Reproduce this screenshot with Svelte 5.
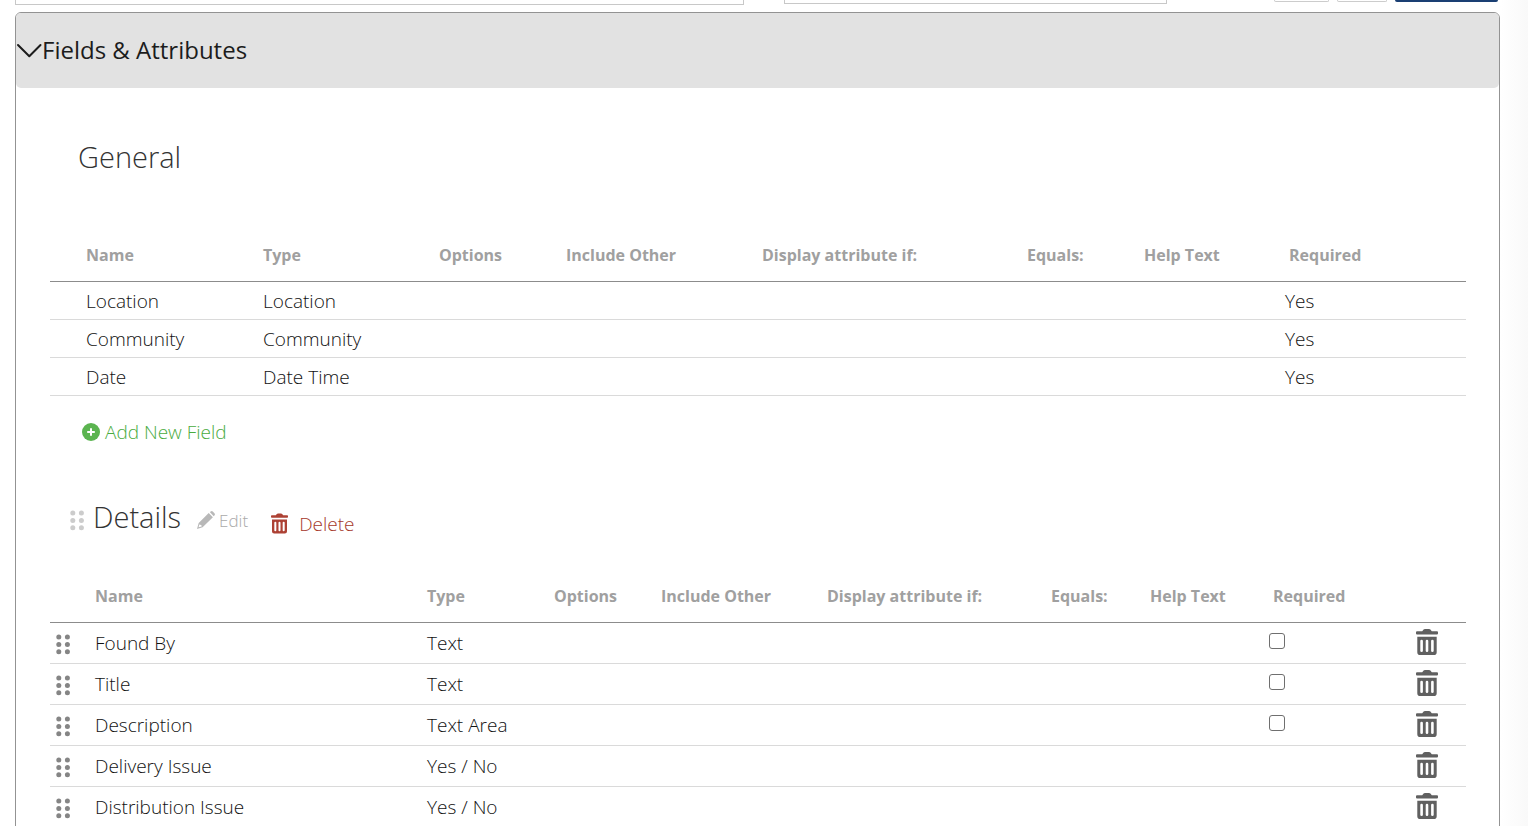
<script>
    const generalColumns = [
        { label: "Name", width: 177 },
        { label: "Type", width: 176 },
        { label: "Options", width: 127 },
        { label: "Include Other", width: 196 },
        { label: "Display attribute if:", width: 265 },
        { label: "Equals:", width: 117 },
        { label: "Help Text", width: 141 },
        { label: "Required", width: 181, inset: true },
    ];

    const detailColumns = [
        { label: "Name", width: 332 },
        { label: "Type", width: 127 },
        { label: "Options", width: 107 },
        { label: "Include Other", width: 166 },
        { label: "Display attribute if:", width: 224 },
        { label: "Equals:", width: 99 },
        { label: "Help Text", width: 119 },
        { label: "Required", width: 147, inset: true },
    ];

    const generalFields = [
        { name: "Location", type: "Location", required: "Yes" },
        { name: "Community", type: "Community", required: "Yes" },
        { name: "Date", type: "Date Time", required: "Yes" },
    ];

    let detailFields = $state([
        { name: "Found By", type: "Text", optional: true, required: false },
        { name: "Title", type: "Text", optional: true, required: false },
        { name: "Description", type: "Text Area", optional: true, required: false },
        { name: "Delivery Issue", type: "Yes / No" },
        { name: "Distribution Issue", type: "Yes / No" },
    ]);

    let open = $state(true);

    const percent = (width) => `${(width / 1416) * 100}%`;

    function remove(field) {
        detailFields = detailFields.filter((f) => f !== field);
    }
</script>

{#snippet grip()}
    <svg class="grip" viewBox="0 0 14 21" aria-hidden="true">
        {#each [3, 10.4, 17.8] as y}
            <circle cx="2.8" cy={y} r="2.5" />
            <circle cx="11.4" cy={y} r="2.5" />
        {/each}
    </svg>
{/snippet}

{#snippet trash()}
    <svg class="trash" viewBox="0 0 22 26" aria-hidden="true">
        <path fill-rule="evenodd" d="M1 2.3h5.2L7.6.6Q8 0 9 0h4q1 0 1.4.6l1.4 1.7H21q1 0 1 1v1.3q0 .9-1 .9H1q-1 0-1-.9V3.3q0-1 1-1zM1.3 7.7h19.4v15.5q0 2.8-2.8 2.8H4.1q-2.8 0-2.8-2.8zM5.6 10.8q-1.3 0-1.3 1.3v9.6q0 1.3 1.3 1.3t1.3-1.3V12.1q0-1.3-1.3-1.3zm5.4 0q-1.3 0-1.3 1.3v9.6q0 1.3 1.3 1.3t1.3-1.3V12.1q0-1.3-1.3-1.3zm5.4 0q-1.3 0-1.3 1.3v9.6q0 1.3 1.3 1.3t1.3-1.3V12.1q0-1.3-1.3-1.3z" />
    </svg>
{/snippet}

<div class="page">
    <div class="toolbar">
        <input class="title-input" aria-label="Title" />
        <input class="search-input" aria-label="Search" />
        <div class="toolbar-buttons">
            <button class="tool" aria-label="Undo"></button>
            <button class="tool" aria-label="Redo"></button>
            <button class="tool primary" aria-label="Save"></button>
        </div>
    </div>

    <section class="panel">
        <button class="panel-header" aria-expanded={open} onclick={() => (open = !open)}>
            <svg class="chevron" class:closed={!open} viewBox="0 0 26 16" aria-hidden="true">
                <path d="M2 2l11.3 11.3L24.5 2" />
            </svg>
            <span>Fields &amp; Attributes</span>
        </button>

        {#if open}
        <div class="panel-body">
            <h2 class="general-title">General</h2>

            <table class="general">
                <colgroup>
                    <col class="lead" />
                    {#each generalColumns as column}
                        <col style:width={percent(column.width)} />
                    {/each}
                </colgroup>
                <thead>
                    <tr>
                        <td></td>
                        {#each generalColumns as column}
                            <th scope="col" class:inset={column.inset}>{column.label}</th>
                        {/each}
                    </tr>
                </thead>
                <tbody>
                    {#each generalFields as field}
                        <tr>
                            <td></td>
                            <td>{field.name}</td>
                            <td>{field.type}</td>
                            <td colspan="5"></td>
                            <td>{field.required}</td>
                        </tr>
                    {/each}
                </tbody>
            </table>

            <button class="add">
                <svg viewBox="0 0 18 18" aria-hidden="true">
                    <circle cx="9" cy="9" r="9" />
                    <path d="M9 5.2v7.6M5.2 9h7.6" />
                </svg>
                Add New Field
            </button>

            <div class="group-title">
                {@render grip()}
                <h2>Details</h2>
                <button class="edit">
                    <svg viewBox="0 0 18 18" aria-hidden="true">
                        <path d="M12.8 1l1-.6q1-.8 2 .2l1.6 1.6q1 1 .2 2l-.9 1.1zM11.7 2.1l4.2 4.2L5.6 16.2 0 18l1.7-5.9zM2.4 13.2l-.8 3.1 3.1-.8-.4-1.5-1.5-.2z" fill-rule="evenodd" />
                    </svg>
                    Edit
                </button>
                <button class="delete">
                    {@render trash()}
                    Delete
                </button>
            </div>

            <table class="details">
                <colgroup>
                    <col class="lead" />
                    {#each detailColumns as column}
                        <col style:width={percent(column.width)} />
                    {/each}
                    <col />
                </colgroup>
                <thead>
                    <tr>
                        <td></td>
                        {#each detailColumns as column}
                            <th scope="col" class:inset={column.inset}>{column.label}</th>
                        {/each}
                        <td></td>
                    </tr>
                </thead>
                <tbody>
                    {#each detailFields as field}
                        <tr>
                            <td class="handle">{@render grip()}</td>
                            <td>{field.name}</td>
                            <td>{field.type}</td>
                            <td colspan="5"></td>
                            <td>
                                {#if field.optional}
                                    <input type="checkbox" aria-label="{field.name} required" bind:checked={field.required} />
                                {/if}
                            </td>
                            <td>
                                <button class="remove" aria-label="Delete {field.name}" onclick={() => remove(field)}>
                                    {@render trash()}
                                </button>
                            </td>
                        </tr>
                    {/each}
                </tbody>
            </table>
        </div>
        {/if}
    </section>
</div>

<style>
:global(body) {
    background: #fff;
    overflow: hidden;
}

.page {
    padding: 0 28px 0 15px;
    background: linear-gradient(to left, #f9f9f9, #fff 28px);
    font-family: "Open Sans", "Noto Sans", sans-serif;
    font-size: 19px;
    font-weight: 300;
    color: #111;
}

button, input {
    box-sizing: border-box;
    margin: 0;
    padding: 0;
    font: inherit;
}

button {
    display: inline-flex;
    align-items: center;
    border: none;
    background: none;
    color: inherit;
    cursor: pointer;
}

svg {
    display: block;
    flex: none;
    fill: currentColor;
}

.toolbar {
    display: flex;
    align-items: flex-start;
    height: 12px;
}

.title-input, .search-input {
    border: 1px solid #c8c8c8;
    border-top: none;
    background: #fff;
}

.title-input {
    flex: 0 0 49.1%;
    width: 49.1%;
    height: 5px;
    margin-right: 40px;
}

.search-input {
    flex: 0 0 25.8%;
    width: 25.8%;
    height: 4px;
}

.toolbar-buttons {
    display: flex;
    gap: 8px;
    margin: 0 2px 0 auto;
}

.tool {
    width: 55px;
    height: 2px;
    border: 1px solid #ccc;
    border-top: none;
    border-radius: 0 0 5px 5px;
}

.tool + .tool {
    width: 50px;
}

.tool.primary {
    width: 103px;
    border: none;
    background: #1a3f73;
}

.panel {
    border: 1px solid #939393;
    border-radius: 6px 6px 0 0;
    background: #fff;
}

.panel-header {
    width: 100%;
    height: 75px;
    padding-bottom: 2px;
    border-radius: 5px;
    background: #e2e2e2;
    color: #1c1c1c;
    font-size: 24px;
    font-weight: 400;
}

.chevron {
    width: 26px;
    height: 16px;
    margin-top: 2px;
    fill: none;
    stroke: currentColor;
    stroke-width: 2;
    stroke-linecap: round;
    stroke-linejoin: round;
}

.chevron.closed {
    transform: rotate(-90deg);
}

.panel-body {
    padding: 48px 33px 0 34px;
}

h2 {
    margin: 0;
    font-size: 29px;
    font-weight: 300;
    line-height: 42px;
    color: #333;
}

.general-title {
    margin: 0 0 52px 28px;
}

table {
    width: 100%;
    table-layout: fixed;
    border-collapse: separate;
    border-spacing: 0;
}

th, td {
    padding: 0;
    text-align: left;
    white-space: nowrap;
}

thead th, thead td {
    box-sizing: border-box;
    height: 52px;
    padding-bottom: 2px;
    border-bottom: 1px solid #8c8c8c;
    color: #a0a0a0;
    font-size: 16px;
    font-weight: 700;
}

th.inset {
    padding-left: 4px;
}

tbody td {
    height: 37px;
    border-bottom: 1px solid #dadada;
}

.general .lead {
    width: 36px;
}

.details .lead {
    width: 45px;
}

.details tbody td {
    height: 40px;
}

.add {
    gap: 5px;
    margin: 22px 0 0 32px;
    height: 28px;
    color: #4aab3e;
}

.add svg {
    width: 18px;
    height: 18px;
    color: #5bb450;
}

.add path {
    stroke: #fff;
    stroke-width: 2;
}

.group-title {
    display: flex;
    align-items: center;
    margin: 49px 0 0 20px;
}

.grip {
    width: 14px;
    height: 21px;
}

.group-title .grip {
    margin: 6px 9px 0 0;
    color: #ccc;
}

.edit {
    gap: 4px;
    margin: 6px 0 0 16px;
    color: #aaa;
    font-size: 17px;
}

.edit svg {
    width: 18px;
    height: 18px;
    color: #b8b8b8;
}

.delete {
    gap: 11px;
    margin: 14px 0 0 23px;
    color: #a6382b;
}

.delete .trash {
    width: 17px;
    height: 21px;
    margin-bottom: 2px;
    color: #ad4134;
}

.details {
    margin-top: 33px;
}

.handle .grip {
    margin: 3px 0 0 6px;
    color: #858585;
}

input[type="checkbox"] {
    appearance: none;
    display: block;
    width: 16px;
    height: 16px;
    margin-bottom: 4px;
    border: 1px solid #6f6f6f;
    border-radius: 3px;
    background: #fff;
}

input[type="checkbox"]:checked {
    background: #1a3f73;
}

.remove {
    display: block;
    margin-bottom: 2px;
    color: #606060;
}

.remove .trash {
    width: 22px;
    height: 26px;
}
</style>
